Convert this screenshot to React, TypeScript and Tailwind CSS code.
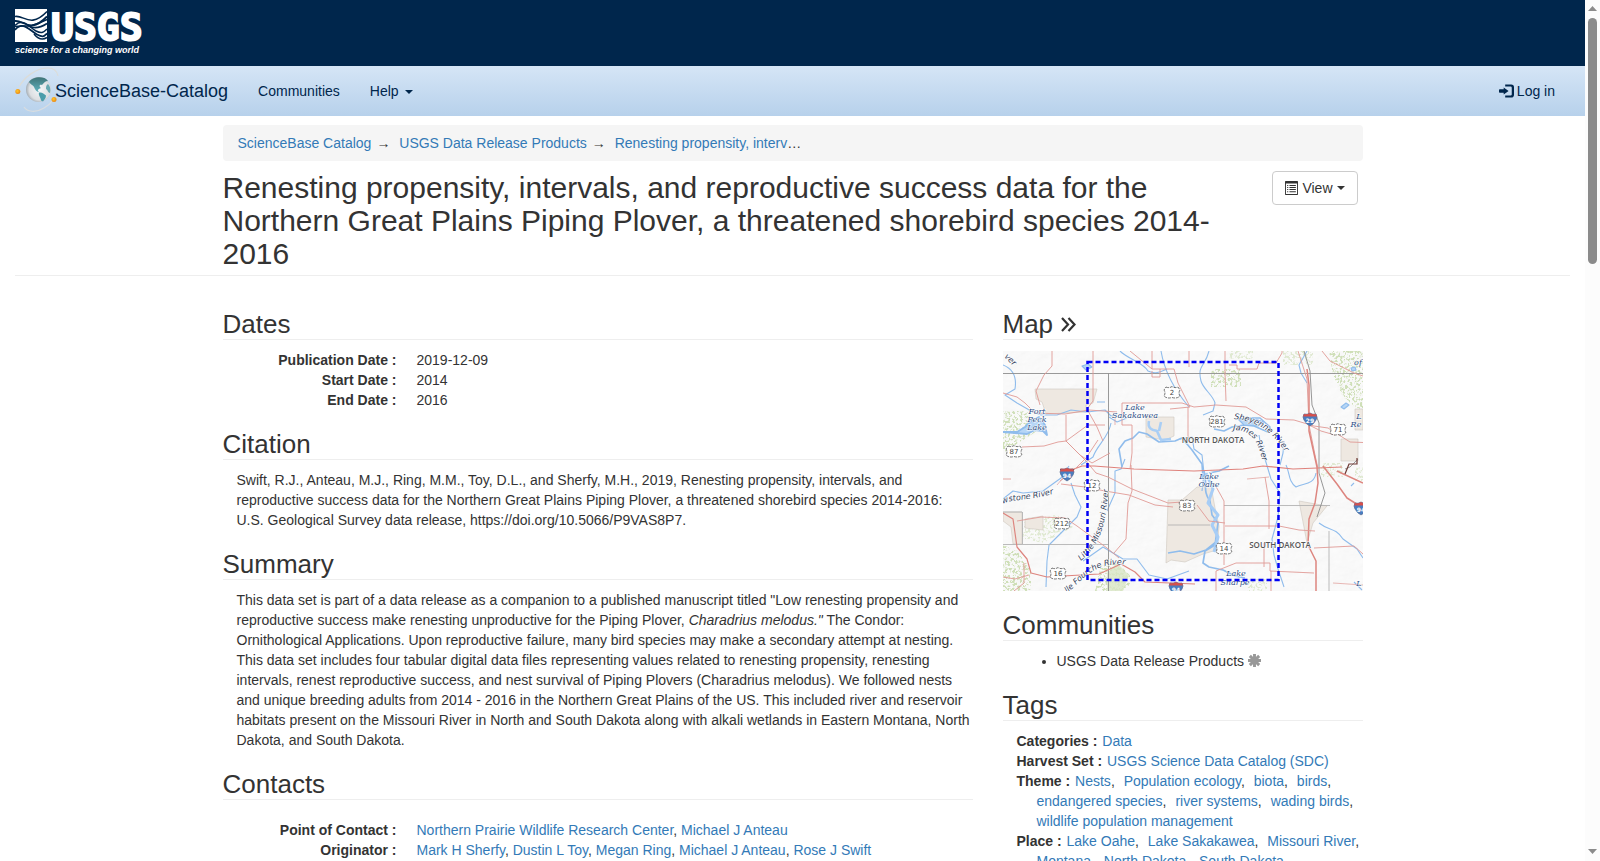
import * as React from 'react';

type IconProps = { className?: string };

const LogInIcon = ({ className }: IconProps) => (
  <svg className={className} viewBox="0 0 16 14" fill="currentColor" aria-hidden="true">
    <path d="M5 3.2 10.2 7 5 10.8V8.8H.8Q0 8.8 0 8V6Q0 5.2.8 5.2H5z" />
    <path d="M6.6 0H13q3 0 3 3v8q0 3-3 3H6.6v-2.2H12.4q1.2 0 1.2-1.2V3.4q0-1.2-1.2-1.2H6.6z" />
  </svg>
);

const ListAltIcon = ({ className }: IconProps) => (
  <svg className={className} viewBox="0 0 14 14" fill="currentColor" preserveAspectRatio="none" aria-hidden="true">
    <path fillRule="evenodd" d="M.7 0h12.6q.7 0 .7.7v12.6q0 .7-.7.7H.7q-.7 0-.7-.7V.7Q0 0 .7 0zM1 2.6V13h12V2.6z" />
    <path d="M2.3 4h1.2v1H2.3zM2.3 6h1.2v1H2.3zM2.3 8h1.2v1H2.3zM2.3 10.2h1.2v1H2.3zM4.8 4h6.9v1H4.8zM4.8 6h6.9v1H4.8zM4.8 8h6.9v1H4.8zM4.8 10.2h6.9v1H4.8z" />
  </svg>
);

const AsteriskIcon = ({ className }: IconProps) => (
  <svg className={className} viewBox="0 0 12 12" fill="none" stroke="currentColor" strokeWidth="2.7" aria-hidden="true">
    <path d="M6 0v12M0 6h12M1.7 1.7l8.6 8.6M10.3 1.7l-8.6 8.6" />
  </svg>
);

const Caret = ({ className }: IconProps) => (
  <svg className={className} width="8" height="4" viewBox="0 0 8 4" fill="currentColor" aria-hidden="true">
    <path d="M0 0h8L4 4z" />
  </svg>
);

const UsgsLogo = () => (
  <svg width="130" height="50" viewBox="0 0 130 50" role="img" aria-label="USGS">
    <rect y="1" width="32" height="33" fill="#fff" />
    <g fill="none" stroke="#00264c" strokeWidth="1.6">
      <path d="M0 8.5C9 6.500 15 21 32 3.500" />
      <path d="M0 13C9 12 15 26 32 8.500" strokeWidth="1.9" />
      <path d="M0 18.500C8 17 12 19 17 17.500S27 14 32 11.500" />
      <path d="M0 17.500C8 9 15 20 21 23S29 24 32 21" strokeWidth="1.5" />
      <path d="M0 22C8 12 15 23 22 26.500S29 28 32 25.500" strokeWidth="1.8" />
      <path d="M14 18C19 21 25 20 32 15.500" strokeWidth="1.7" />
      <path d="M19 26C23 31 28 32 32 29.500" strokeWidth="1.5" />
    </g>
    <text
      x="36"
      y="32"
      fill="#fff"
      stroke="#fff"
      strokeWidth="2"
      fontFamily="'DejaVu Sans Mono', monospace"
      fontWeight="700"
      fontSize="38"
    >
      USGS
    </text>
    <text
      x="0"
      y="45"
      fill="#fff"
      fontFamily="'Liberation Sans', sans-serif"
      fontWeight="700"
      fontStyle="italic"
      fontSize="9"
    >
      science for a changing world
    </text>
  </svg>
);

const GlobeLogo = () => (
  <svg width="46" height="48" viewBox="0 0 46 48" aria-hidden="true">
    <defs>
      <radialGradient id="globe" cx="55%" cy="50%" r="60%">
        <stop offset="0" stopColor="#f4f6f8" />
        <stop offset="0.7" stopColor="#dcdfe2" />
        <stop offset="1" stopColor="#8f9aa2" />
      </radialGradient>
      <linearGradient id="land" x1="0" y1="0" x2="0" y2="1">
        <stop offset="0" stopColor="#3f7478" />
        <stop offset="1" stopColor="#5fb3bf" />
      </linearGradient>
      <radialGradient id="moon" cx="40%" cy="40%" r="60%">
        <stop offset="0" stopColor="#ffc928" />
        <stop offset="1" stopColor="#ea8a17" />
      </radialGradient>
    </defs>
    <path d="M4 20C10 9 22 1 33 1c6 0 9 3 10 8" fill="none" stroke="#dcdcd8" strokeWidth="1.2" />
    <path d="M9 40c3 5 12 6 20 1 4-2 7-5 9-8" fill="none" stroke="#d9dde0" strokeWidth="1.2" />
    <circle cx="23.5" cy="22.5" r="12.5" fill="url(#globe)" />
    <path d="M14 15C17 10 29 8 33 14c-3 0-4 2-6 4-3-1-3 2-1 3-3 1-4 2-2 4-2 0-4-2-5-5-1-2-3-2-5-5z" fill="url(#land)" />
    <path d="M24 25.500c3-.5 5 1 7 3 0 3-2 4-3 6l-2-1c0-3-3-5-2-8z" fill="#4b9dab" />
    <path d="M33 17c2 2 3 5 2 9-2 0-2-3-4-4 0-2 0-4 2-5z" fill="#67a9b2" />
    <circle cx="2.8" cy="24.5" r="2.5" fill="url(#moon)" />
    <circle cx="39" cy="32.5" r="2.5" fill="url(#moon)" />
  </svg>
);

const shields = [
  { x: 169, y: 41, label: '2' },
  { x: 11, y: 100, label: '87' },
  { x: 214, y: 70, label: '281' },
  { x: 335, y: 78, label: '71' },
  { x: 89, y: 134, label: '12' },
  { x: 59, y: 172, label: '212' },
  { x: 55, y: 222, label: '16' },
  { x: 184, y: 154, label: '83' },
  { x: 221, y: 197, label: '14' },
];

const interstates = [
  { x: 307, y: 68, label: '29' },
  { x: 64, y: 123, label: '94' },
  { x: 173, y: 237, label: '94' },
  { x: 358, y: 157, label: '94' },
];

const MapPreview = () => (
  <svg className="block w-full" viewBox="0 0 360 240" role="img" aria-label="Map of North and South Dakota">
    <defs>
      <filter id="speckle" x="0" y="0" width="100%" height="100%">
        <feTurbulence type="fractalNoise" baseFrequency="0.4" numOctaves="3" seed="8" />
        <feColorMatrix values="0 0 0 0 0  0 0 0 0 0  0 0 0 0 0  7 0 0 0 -3.4" />
        <feComposite in="SourceGraphic" operator="in" />
      </filter>
      <filter id="relief" x="0" y="0" width="100%" height="100%">
        <feTurbulence type="fractalNoise" baseFrequency="0.06 0.09" numOctaves="4" seed="3" />
        <feDiffuseLighting lightingColor="#fff" surfaceScale="1.2">
          <feDistantLight azimuth="225" elevation="65" />
        </feDiffuseLighting>
      </filter>
      <path id="moreau" d="M1 6 20 24" />
      <path id="yellowstone" d="M0 153C10 147 24 152 66 138" />
      <path id="littleMo" d="M78 210C98 192 104 176 107 116" />
      <path id="belle" d="M64 242C82 228 92 206 134 216" />
      <path id="sheyenne" d="M231 68C256 70 278 84 292 122" />
      <path id="james" d="M230 79C252 80 256 92 262 122" />
    </defs>

    <rect width="360" height="240" fill="#fbfbfb" />
    <rect width="360" height="240" filter="url(#relief)" opacity="0.2" />

    {/* forests and grassland */}
    <g fill="#cfdfb8" filter="url(#speckle)">
      <path d="M0 60h24l10 20-34 22zM208 18h30v18h-30zM326 0h34v62l-20-16-10-22zM0 194l14 6 14 18v22H0zM98 214l18-2 14 16-8 12h-30z" />
      <path d="M280 0h30v14h-30zM226 0h24v8h-24zM318 112h22v14h-22zM14 168l40-4 16 12-30 16-26-6zM244 228h20v12h-20zM352 116h8v14h-8z" opacity="0.6" />
    </g>
    <path d="M104 222l10-10 12 12-6 16h-16z" fill="#d9e6c6" opacity="0.8" />

    {/* reservations */}
    <g fill="#eee8e1" stroke="#cfc8c0" strokeWidth="0.6">
      <path d="M32 38h62l-4 14-7 2v7l-40 2-4-12-6-3z" />
      <path d="M143 66h28v19l-9 4-19-3z" />
      <path d="M165 149h14l15-13 14-1 4 22 4 18-2 24-14 4-18 8-14-2-5 3z" />
      <path d="M0 161h19v32H10L8 176l-8-6zM22 168l18-3v14l-18-2zM296 150l28 5-14 17-6 20z" />
      <path d="M338 88h17v22h-17zM352 58h8v21h-8z" />
    </g>

    {/* water */}
    <g fill="none" stroke="#8fbcec" strokeWidth="1.100" strokeLinejoin="round">
      <path d="M0 14c10 4 14 12 12 24l-10 6 12 8 14 8 10 4 16 0 14-5 16 2 18-2 6 6 6-1" />
      <path d="M0 81h14l8-5 6-6 8-4 6 8 2 10-4-4-8-1-8 4z" fill="#b6d6f6" strokeWidth="1.8" />
      <path d="M106 66l8 5 10-4M108 72c-2 14-14 22-18 34L78 114" />
      <path d="M119 116l-3-18 6-8 8-3 6-6 8 2 12 8 16-1 7-3 10 12 10 14 1 14" strokeWidth="1.6" />
      <path d="M146 70c-2 8 4 9 8 10l4 9 10-1M158 71l-2 9" strokeWidth="2.6" stroke="#a9cef5" />
      <path d="M117 0c8 8 24 12 28 20 8 4 14 0 19-2M158 0c4 24 16 42 28 56M206 0c-4 16-12 14-8 30 2 8 12 14 14 22l-2 8-10 4M177 88l12-2 2 12 8 6 2 18-2 18" />
      <path d="M201 120c4 12-2 20 6 30l2 14 6 8-3 22-10 6-2 12 6 4 14 3 12 6 10 2M165 202l12-2 14 3 12-4 10-8M206 122l10-2 10-5" strokeWidth="1.7" />
      <path d="M203 122l7 16-5 14 10 12-6 10 6 12-4 15" stroke="#a7cdf6" strokeWidth="3" />
      <path d="M211 78l10 2 8-4 12-2 10 1 14 6 2-5-10-9-14 0" strokeWidth="1.6" />
      <path d="M235 68l14-1 12 4-6 4-14-1z" fill="#b6d6f6" />
      <path d="M256 84l2 12 4 12 6 20 9 14-2 24-6 22 2 16 4 14 6 18M281 90l-1 12-3 12M283 114c4 8 2 16 10 22 8-4 18-2 20-14M304 0l-8 14 2 8 6 10" />
      <path d="M0 148l10-8 10 2 20-2 18-13 8-12M68 132l4 12 6 12-4 10-10 10-18 18-2 16-1 26M104 160l8-18 0-22 6-2 4-10M80 210l20-14 20 12 14 0 12 16 18 4 22-8" />
      <path d="M316 172c10 8 16 4 24 16l14 10 6 9M351 231l8 8" />
      <path d="M79 15l6-2 4 3-6 3zM94 51h8M338 56l5-4 3 2-5 4zM348 17l4-1 1 3-4 1zM348 135l3-3" fill="#b6d6f6" />
    </g>

    {/* state and county lines */}
    <g fill="none" stroke="#8d8d8d" strokeWidth="0.9">
      <path d="M0 22.500h360M105.500 22.500V240" />
      <path d="M0 193.500h105M19.500 161v32M165 174h42M221 154.500h106M326 180v60M0 161h19" stroke="#b3b3b3" />
      <path d="M301 0l6 20 2 34 7 18v50l6 20-4 12-4 12M355 108l-8 8-5 2" stroke="#8b8b8b" />
    </g>

    {/* highways */}
    <g fill="none" stroke="#e09a95" strokeWidth="0.9" strokeLinejoin="round">
      <path d="M49 0v15l-8 9-8 16 4 14M90 0v50l-6 8 10 18 6 14M149 0v18h8v8h-8v-6M157 18h14l4 14 12 24-20 2M119 52h60l12 4 22-2 30 2 20 12 28 1 20 6 14 2 22 14 26 1M127 0l22 18M119 52v22h10v28l-2 16" />
      <path d="M0 42l14 4 8 6 10 10 30 1 24-4 28 2M19 96l22-1 14-4 8-1 22-16h17M63 64v26l14 14 12 8 18-10M0 128h8M63 90l20 20 10 12 12 4 24 12 36 14 14-1" />
      <path d="M57 118h14l8-3 12 0 40 3 60 2 49-2 20-3 30 3 49-2" stroke="#df827c" strokeWidth="1.2" />
      <path d="M186 0v16M185 56v32M222 0v22l1 28M226 14h8v4h20l2-6h17l6-10V0M295 0l9 28 2 46 6 30 3 14M306 74l12 6 14 4M319 0l8 10 24 12 9 3" />
      <path d="M304 18l2 16 0 46 8 36 1 16-3 20-6 16-1 26 8 16v44M320 115l14 18 10 14 16 10M334 120l26 12" stroke="#dd857f" strokeWidth="1.5" />
      <path d="M57 130l10-7 16-16 12-18M58 133l24 3 20 4 24 4 26 10 18 2M128 114l1 26-4 12-2 36-12 14M14 170l24-4 24 1 12 8 30 22 12 10" />
      <path d="M0 162l10 6 4 28 10 12 4 14 16 4 16-1 36-2 22-10 14 8 10 10 50 2" stroke="#dd857f" strokeWidth="1.200" />
      <path d="M211 132l10 18v64M194 154l12 16 16 2M222 175h40l14 0 20 4 16 1M262 126l4 24v28M261 192v24M213 240v-20l20-8h34v8l44 2M268 220v20M311 197l40-2 9 8M0 226l12 2 14-4M21 212v20l-10 8" />
      <path d="M58 118l6 4-10 12M112 66v8M244 128l22-2M330 232l30 2" strokeWidth="0.7" />
    </g>
    <path d="M57 118.500h14M354 107v6h-8l-4 10" stroke="#6f3b35" strokeWidth="1.2" fill="none" />

    {/* water names */}
    <g
      fill="#2f4f86"
      stroke="#fff"
      strokeWidth="1"
      paintOrder="stroke"
      fontFamily="'DejaVu Serif', 'Liberation Serif', serif"
      fontStyle="italic"
      fontSize="8"
      textAnchor="middle"
    >
      <text x="34" y="63">Fort</text>
      <text x="34" y="71">Peck</text>
      <text x="34" y="79">Lake</text>
      <text x="132" y="59">Lake</text>
      <text x="132" y="67">Sakakawea</text>
      <text x="206" y="128">Lake</text>
      <text x="206" y="136">Oahe</text>
      <text x="233" y="225">Lake</text>
      <text x="232" y="234">Sharpe</text>
      <text x="355" y="14">of</text>
      <text x="356" y="68">L</text>
      <text x="353" y="76">Re</text>
      <text x="356" y="235">L</text>
    </g>
    <g
      fill="#33415c"
      stroke="#fff"
      strokeWidth="1"
      paintOrder="stroke"
      fontFamily="'DejaVu Sans', sans-serif"
      fontStyle="italic"
      fontSize="8"
    >
      <text><textPath href="#moreau">ver</textPath></text>
      <text><textPath href="#yellowstone">wstone River</textPath></text>
      <text><textPath href="#littleMo">Little Missouri River</textPath></text>
      <text><textPath href="#belle">lle Fourche River</textPath></text>
      <text><textPath href="#sheyenne">Sheyenne River</textPath></text>
      <text><textPath href="#james">James River</textPath></text>
    </g>

    {/* state names */}
    <g
      fill="#555"
      stroke="#fff"
      strokeWidth="1"
      paintOrder="stroke"
      fontFamily="'Open Sans', sans-serif"
      fontWeight="600"
      fontSize="8"
      textAnchor="middle"
    >
      <text x="210" y="92">NORTH DAKOTA</text>
      <text x="277" y="197">SOUTH DAKOTA</text>
    </g>

    {/* route shields */}
    {shields.map((s) => (
      <g key={s.label}>
        <path
          d={`M${s.x - 6} ${s.y - 5}q3 1.500 6-.5q3 2 6 .5l2 3q-2 3 0 6q-3 3-8 1.500q-5 1.500-8-1.500q2-3 0-6z`}
          fill="#fff"
          stroke="#555"
          strokeWidth="0.8"
          strokeDasharray="3 1"
        />
        <text x={s.x} y={s.y + 3} fill="#444" fontFamily="'DejaVu Sans', sans-serif" fontSize="7" textAnchor="middle">
          {s.label}
        </text>
      </g>
    ))}
    {interstates.map((s) => (
      <g key={`${s.x}-${s.y}`}>
        <path d={`M${s.x - 6} ${s.y - 5}q3 1 6-1q3 2 6 1q2 3 0 6q-2 4-6 6q-4-2-6-6q-2-3 0-6z`} fill="#4a7dc0" stroke="#5b6f92" strokeWidth="0.7" />
        <path d={`M${s.x - 6} ${s.y - 5}q3 1 6-1q3 2 6 1l1 2.500h-14z`} fill="#d6504b" />
        <text x={s.x} y={s.y + 4} fill="#fff" fontFamily="'DejaVu Sans', sans-serif" fontWeight="700" fontSize="6" textAnchor="middle">
          {s.label}
        </text>
      </g>
    ))}

    {/* bounding box of the item */}
    <rect x="84.5" y="11" width="191" height="218" fill="none" stroke="#0000f5" strokeWidth="2.5" strokeDasharray="5 3" />
  </svg>
);

const TextLink = ({ children }: { children: React.ReactNode }) => (
  <a href="#" className="text-[#337ab7] hover:underline">{children}</a>
);

const SectionTitle = ({ children }: { children: React.ReactNode }) => (
  <h2 className="flex items-center gap-2 border-b border-[#eee] text-[26px] leading-[29px]">{children}</h2>
);

const Section = ({ title, children }: { title: React.ReactNode; children: React.ReactNode }) => (
  <section className="mb-5">
    <SectionTitle>{title}</SectionTitle>
    {children}
  </section>
);

const Row = ({ label, children }: { label: string; children: React.ReactNode }) => (
  <div className="flex gap-5">
    <dt className="w-[174px] shrink-0 text-right font-bold">{label} :</dt>
    <dd>{children}</dd>
  </div>
);

const dates = [
  ['Publication Date', '2019-12-09'],
  ['Start Date', '2014'],
  ['End Date', '2016'],
];

const contacts = [
  { role: 'Point of Contact', names: ['Northern Prairie Wildlife Research Center', 'Michael J Anteau'] },
  { role: 'Originator', names: ['Mark H Sherfy', 'Dustin L Toy', 'Megan Ring', 'Michael J Anteau', 'Rose J Swift'] },
];

const tags = [
  { label: 'Categories', items: ['Data'] },
  { label: 'Harvest Set', items: ['USGS Science Data Catalog (SDC)'] },
  {
    label: 'Theme',
    items: ['Nests', 'Population ecology', 'biota', 'birds', 'endangered species', 'river systems', 'wading birds', 'wildlife population management'],
  },
  { label: 'Place', items: ['Lake Oahe', 'Lake Sakakawea', 'Missouri River', 'Montana', 'North Dakota', 'South Dakota'] },
];

const Header = () => (
  <header>
    <div className="h-[66px] bg-[#00264c] px-[15px] pt-2">
      <a href="#" className="inline-block">
        <UsgsLogo />
      </a>
    </div>
    <nav className="flex h-[50px] items-center bg-linear-to-b from-[#d5e5f6] to-[#b7d1eb] px-[15px] text-[#00264c]">
      <a href="#" className="flex items-center text-lg">
        <span className="-mr-[6px]"><GlobeLogo /></span>
        ScienceBase-Catalog
      </a>
      <a href="#" className="ml-[30px]">Communities</a>
      <button type="button" className="ml-[30px] flex items-center gap-[6px]">
        Help <Caret className="mt-px" />
      </button>
      <a href="#" className="mr-[15px] ml-auto flex items-center gap-[3px]">
        <LogInIcon className="h-[14px] w-[15px]" />
        Log in
      </a>
    </nav>
  </header>
);

const Breadcrumb = () => (
  <ol className="mt-[9px] mb-[10px] flex rounded bg-[#f5f5f5] px-[15px] py-2">
    <li><TextLink>ScienceBase Catalog</TextLink></li>
    <li><span className="px-[5px]">→ </span><TextLink>USGS Data Release Products</TextLink></li>
    <li><span className="px-[5px]">→ </span><TextLink>Renesting propensity, interv</TextLink>…</li>
  </ol>
);

const Scrollbar = () => (
  <div className="flex w-[15px] shrink-0 flex-col items-center bg-[#fcfcfc] text-[#8b8b8b]" aria-hidden="true">
    <svg className="mt-[6px] h-[5px] w-[9px]" viewBox="0 0 9 5" fill="currentColor"><path d="M0 5 4.500 0 9 5z" /></svg>
    <div className="mt-[7px] h-[246px] w-[9px] rounded-full bg-[#8b8b8b]" />
    <svg className="mt-auto mb-[7px] h-[5px] w-[9px]" viewBox="0 0 9 5" fill="currentColor"><path d="M0 0h9L4.500 5z" /></svg>
  </div>
);

export default function App() {
  return (
    <div className="flex h-screen overflow-hidden bg-white font-['Liberation_Sans',Arial,sans-serif] text-sm text-[#333]">
      <div className="min-w-0 flex-1 overflow-hidden">
        <Header />

        <main>
          <div className="mx-[15px] border-b border-[#eee] pb-[5px]">
            <div className="mx-auto max-w-[1140px]">
              <Breadcrumb />
              <div className="flex items-start">
                <h1 className="flex-1 pr-10 text-[30px] leading-[33px]">
                  Renesting propensity, intervals, and reproductive success data for the Northern Great Plains Piping Plover, a threatened shorebird species 2014-2016
                </h1>
                <button type="button" className="mr-[5px] flex items-center gap-1 rounded border border-[#ccc] px-3 py-[6px]">
                  <ListAltIcon className="h-[14px] w-[13px]" />
                  View
                  <Caret />
                </button>
              </div>
            </div>
          </div>

          <div className="mx-auto flex max-w-[1140px] gap-[30px] pt-[34px]">
            <div className="min-w-0 flex-1">
              <Section title="Dates">
                <dl className="pt-[10px]">
                  {dates.map(([label, value]) => (
                    <Row key={label} label={label}>{value}</Row>
                  ))}
                </dl>
              </Section>

              <Section title="Citation">
                <p className="pt-[10px] pl-[14px]">
                  Swift, R.J., Anteau, M.J., Ring, M.M., Toy, D.L., and Sherfy, M.H., 2019, Renesting propensity, intervals, and reproductive success data for the Northern Great Plains Piping Plover, a threatened shorebird species 2014-2016: U.S. Geological Survey data release, https://doi.org/10.5066/P9VAS8P7.
                </p>
              </Section>

              <Section title="Summary">
                <p className="pt-[10px] pl-[14px]">
                  This data set is part of a data release as a companion to a published manuscript titled "Low renesting propensity and reproductive success make renesting unproductive for the Piping Plover, <i>Charadrius melodus."</i> The Condor: Ornithological Applications. Upon reproductive failure, many bird species may make a secondary attempt at nesting. This data set includes four tabular digital data files representing values related to renesting propensity, renesting intervals, renest reproductive success, and nest survival of Piping Plovers (Charadrius melodus). We followed nests and unique breeding adults from 2014 - 2016 in the Northern Great Plains of the US. This included river and reservoir habitats present on the Missouri River in North and South Dakota along with alkali wetlands in Eastern Montana, North Dakota, and South Dakota.
                </p>
              </Section>

              <Section title="Contacts">
                <dl className="pt-5">
                  {contacts.map(({ role, names }) => (
                    <Row key={role} label={role}>
                      {names.map((name, i) => (
                        <React.Fragment key={name}>
                          {i > 0 && ', '}
                          <TextLink>{name}</TextLink>
                        </React.Fragment>
                      ))}
                    </Row>
                  ))}
                </dl>
              </Section>
            </div>

            <aside className="w-[360px] shrink-0">
              <Section
                title={
                  <>
                    Map
                    <svg className="h-[15px] w-[15px]" viewBox="0 0 15 15" fill="none" stroke="currentColor" strokeWidth="2.2" aria-hidden="true">
                      <path d="M1 1l6 6.500-6 6.500M7.500 1l6 6.500-6 6.500" />
                    </svg>
                  </>
                }
              >
                <a href="#" className="mt-[11px] block"><MapPreview /></a>
              </Section>

              <Section title="Communities">
                <ul className="list-disc pt-[10px] pl-[54px]">
                  <li>
                    USGS Data Release Products{' '}
                    <AsteriskIcon className="inline-block size-[13px] align-[-1px] text-[#999]" />
                  </li>
                </ul>
              </Section>

              <Section title="Tags">
                <dl className="-mr-[5px] pt-[10px] pl-[14px]">
                  {tags.map(({ label, items }) => (
                    <div key={label} className="pl-5 -indent-5">
                      <dt className="mr-px inline font-bold">{label} : </dt>
                      <dd className="inline">
                        {items.map((item, i) => (
                          <React.Fragment key={item}>
                            <TextLink>{item}</TextLink>
                            {i < items.length - 1 && <span className="mr-[5px]">,</span>}{' '}
                          </React.Fragment>
                        ))}
                      </dd>
                    </div>
                  ))}
                </dl>
              </Section>
            </aside>
          </div>
        </main>
      </div>
      <Scrollbar />
    </div>
  );
}
